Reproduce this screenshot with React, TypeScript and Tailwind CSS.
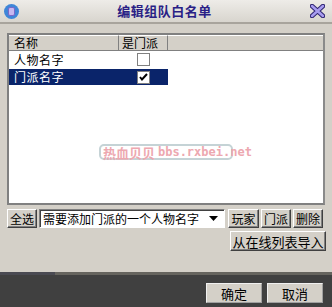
import React from 'react';

const font = { fontFamily: '"Noto Sans CJK SC", "Liberation Sans", sans-serif' };

const Btn = ({ children, className = '' }: { children: React.ReactNode; className?: string }) => (
  <button
    className={`flex items-center justify-center bg-[#d4d0c8] border border-t-white border-l-white border-r-[#404040] border-b-[#404040] shadow-[inset_-1px_-1px_0_#808080] text-[12px] leading-none text-black ${className}`}
  >
    {children}
  </button>
);

const Check = ({ checked }: { checked?: boolean }) => (
  <div className="w-[13px] h-[13px] bg-white border border-[#808080] flex items-center justify-center">
    {checked && (
      <svg width="9" height="8" viewBox="0 0 9 8">
        <path d="M1 4 L3 6.5 L8 1" stroke="#000" strokeWidth="2" fill="none" />
      </svg>
    )}
  </div>
);

export default function App() {
  return (
    <div className="w-[332px] h-[307px] bg-[#d4d0c8] flex flex-col overflow-hidden" style={font}>
      {/* title bar */}
      <div className="h-[24px] flex items-center px-[4px] bg-gradient-to-b from-[#eeece8] to-[#d8d5ce] border-b-2 border-[#a8a49c]">
        <div className="w-[15px] h-[15px] rounded-full bg-[#3f86d8] flex items-center justify-center">
          <div className="w-[7px] h-[9px] rounded-[2px] bg-[#c8b8f0] border border-[#7a68c8]" />
        </div>
        <div className="flex-1 text-center text-[13px] font-bold text-[#2a1f86] tracking-[0.5px]">编辑组队白名单</div>
        <svg width="15" height="14" viewBox="0 0 15 14" className="mr-[3px]">
          <path d="M2 2 L13 12 M13 2 L2 12" stroke="#2d2470" strokeWidth="4.5" strokeLinecap="round" />
          <path d="M2 2 L13 12 M13 2 L2 12" stroke="#a89cf0" strokeWidth="2.5" strokeLinecap="round" />
        </svg>
      </div>

      {/* body */}
      <div className="flex-1 flex flex-col px-[7px] pt-[9px]">
        <div className="relative h-[172px] bg-white border-2 border-[#808080] border-r-[#8a8a8a] flex flex-col">
          {/* header */}
          <div className="flex h-[16px] bg-[#d4d0c8] text-[12px] leading-none text-black">
            <div className="w-[110px] flex items-center pl-[5px] border-r border-[#808080] border-b border-b-[#808080] border-t border-t-white">名称</div>
            <div className="w-[49px] flex items-center pl-[3px] border-r border-[#808080] border-b border-b-[#808080] border-t border-t-white">是门派</div>
            <div className="flex-1 border-b border-[#808080] border-t border-t-white" />
          </div>
          <div className="flex h-[18px] pb-[1px] items-center text-[12px] tracking-[0.5px] leading-[14px] text-black">
            <div className="w-[110px] pl-[5px]">人物名字</div>
            <div className="w-[49px] pl-[18px]"><Check /></div>
          </div>
          <div className="flex h-[16px] items-center text-[12px] tracking-[0.5px] leading-[14px] text-white">
            <div className="w-[159px] h-full bg-[#0a246a] flex items-center">
              <div className="w-[110px] pl-[5px]">门派名字</div>
              <div className="w-[49px] pl-[18px]"><Check checked /></div>
            </div>
          </div>

          {/* watermark */}
          <div className="absolute left-[90px] top-[109px] w-[134px] h-[16px] rounded-[5px] border-2 border-[#c5d3d6] flex items-center pl-[2px] text-[13px] leading-none text-[#eda8b0] font-bold whitespace-nowrap">
            热血贝贝&nbsp;<span style={{ fontFamily: '"DejaVu Sans Mono", monospace' }} className="text-[12px]">bbs.rxbei.net</span>
          </div>
        </div>

        {/* controls */}
        <div className="flex mt-[4px] h-[19px]">
          <Btn className="w-[30px] h-[19px]">全选</Btn>
          <div className="ml-[2px] w-[186px] h-[19px] bg-white border border-t-[#808080] border-l-[#808080] border-r-white border-b-white shadow-[inset_1px_1px_0_#404040] flex items-center pl-[3px] pr-[6px] text-[12px] leading-none text-black">
            <span className="flex-1">需要添加门派的一个人物名字</span>
            <svg width="9" height="5" viewBox="0 0 9 5">
              <path d="M0 0 H9 L4.5 5 Z" fill="#000" />
            </svg>
          </div>
          <Btn className="ml-[3px] w-[31px] h-[19px]">玩家</Btn>
          <Btn className="ml-[2px] w-[30px] h-[19px]">门派</Btn>
          <Btn className="ml-[2px] w-[30px] h-[19px]">删除</Btn>
        </div>
        <div className="flex justify-end mt-[3px] -mr-[1px]">
          <Btn className="w-[96px] h-[20px] text-[13px]">从在线列表导入</Btn>
        </div>
      </div>

      {/* footer */}
      <div className="flex h-[3px]">
        <div className="w-[55px] bg-[#4a4a52]" />
        <div className="flex-1 bg-[#66645e]" />
      </div>
      <div className="h-[32px] bg-[#404040] flex items-start justify-end pt-[8px] pr-[9px] gap-[5px]">
        <button className="w-[56px] h-[20px] bg-[#d4d0c8] border border-t-[#f0f0f0] border-l-[#f0f0f0] border-r-[#a0a0a0] border-b-[#a0a0a0] text-[13px] leading-none text-black">确定</button>
        <button className="w-[56px] h-[20px] bg-[#d4d0c8] border border-t-[#f0f0f0] border-l-[#f0f0f0] border-r-[#a0a0a0] border-b-[#a0a0a0] text-[13px] leading-none text-black">取消</button>
      </div>
    </div>
  );
}
